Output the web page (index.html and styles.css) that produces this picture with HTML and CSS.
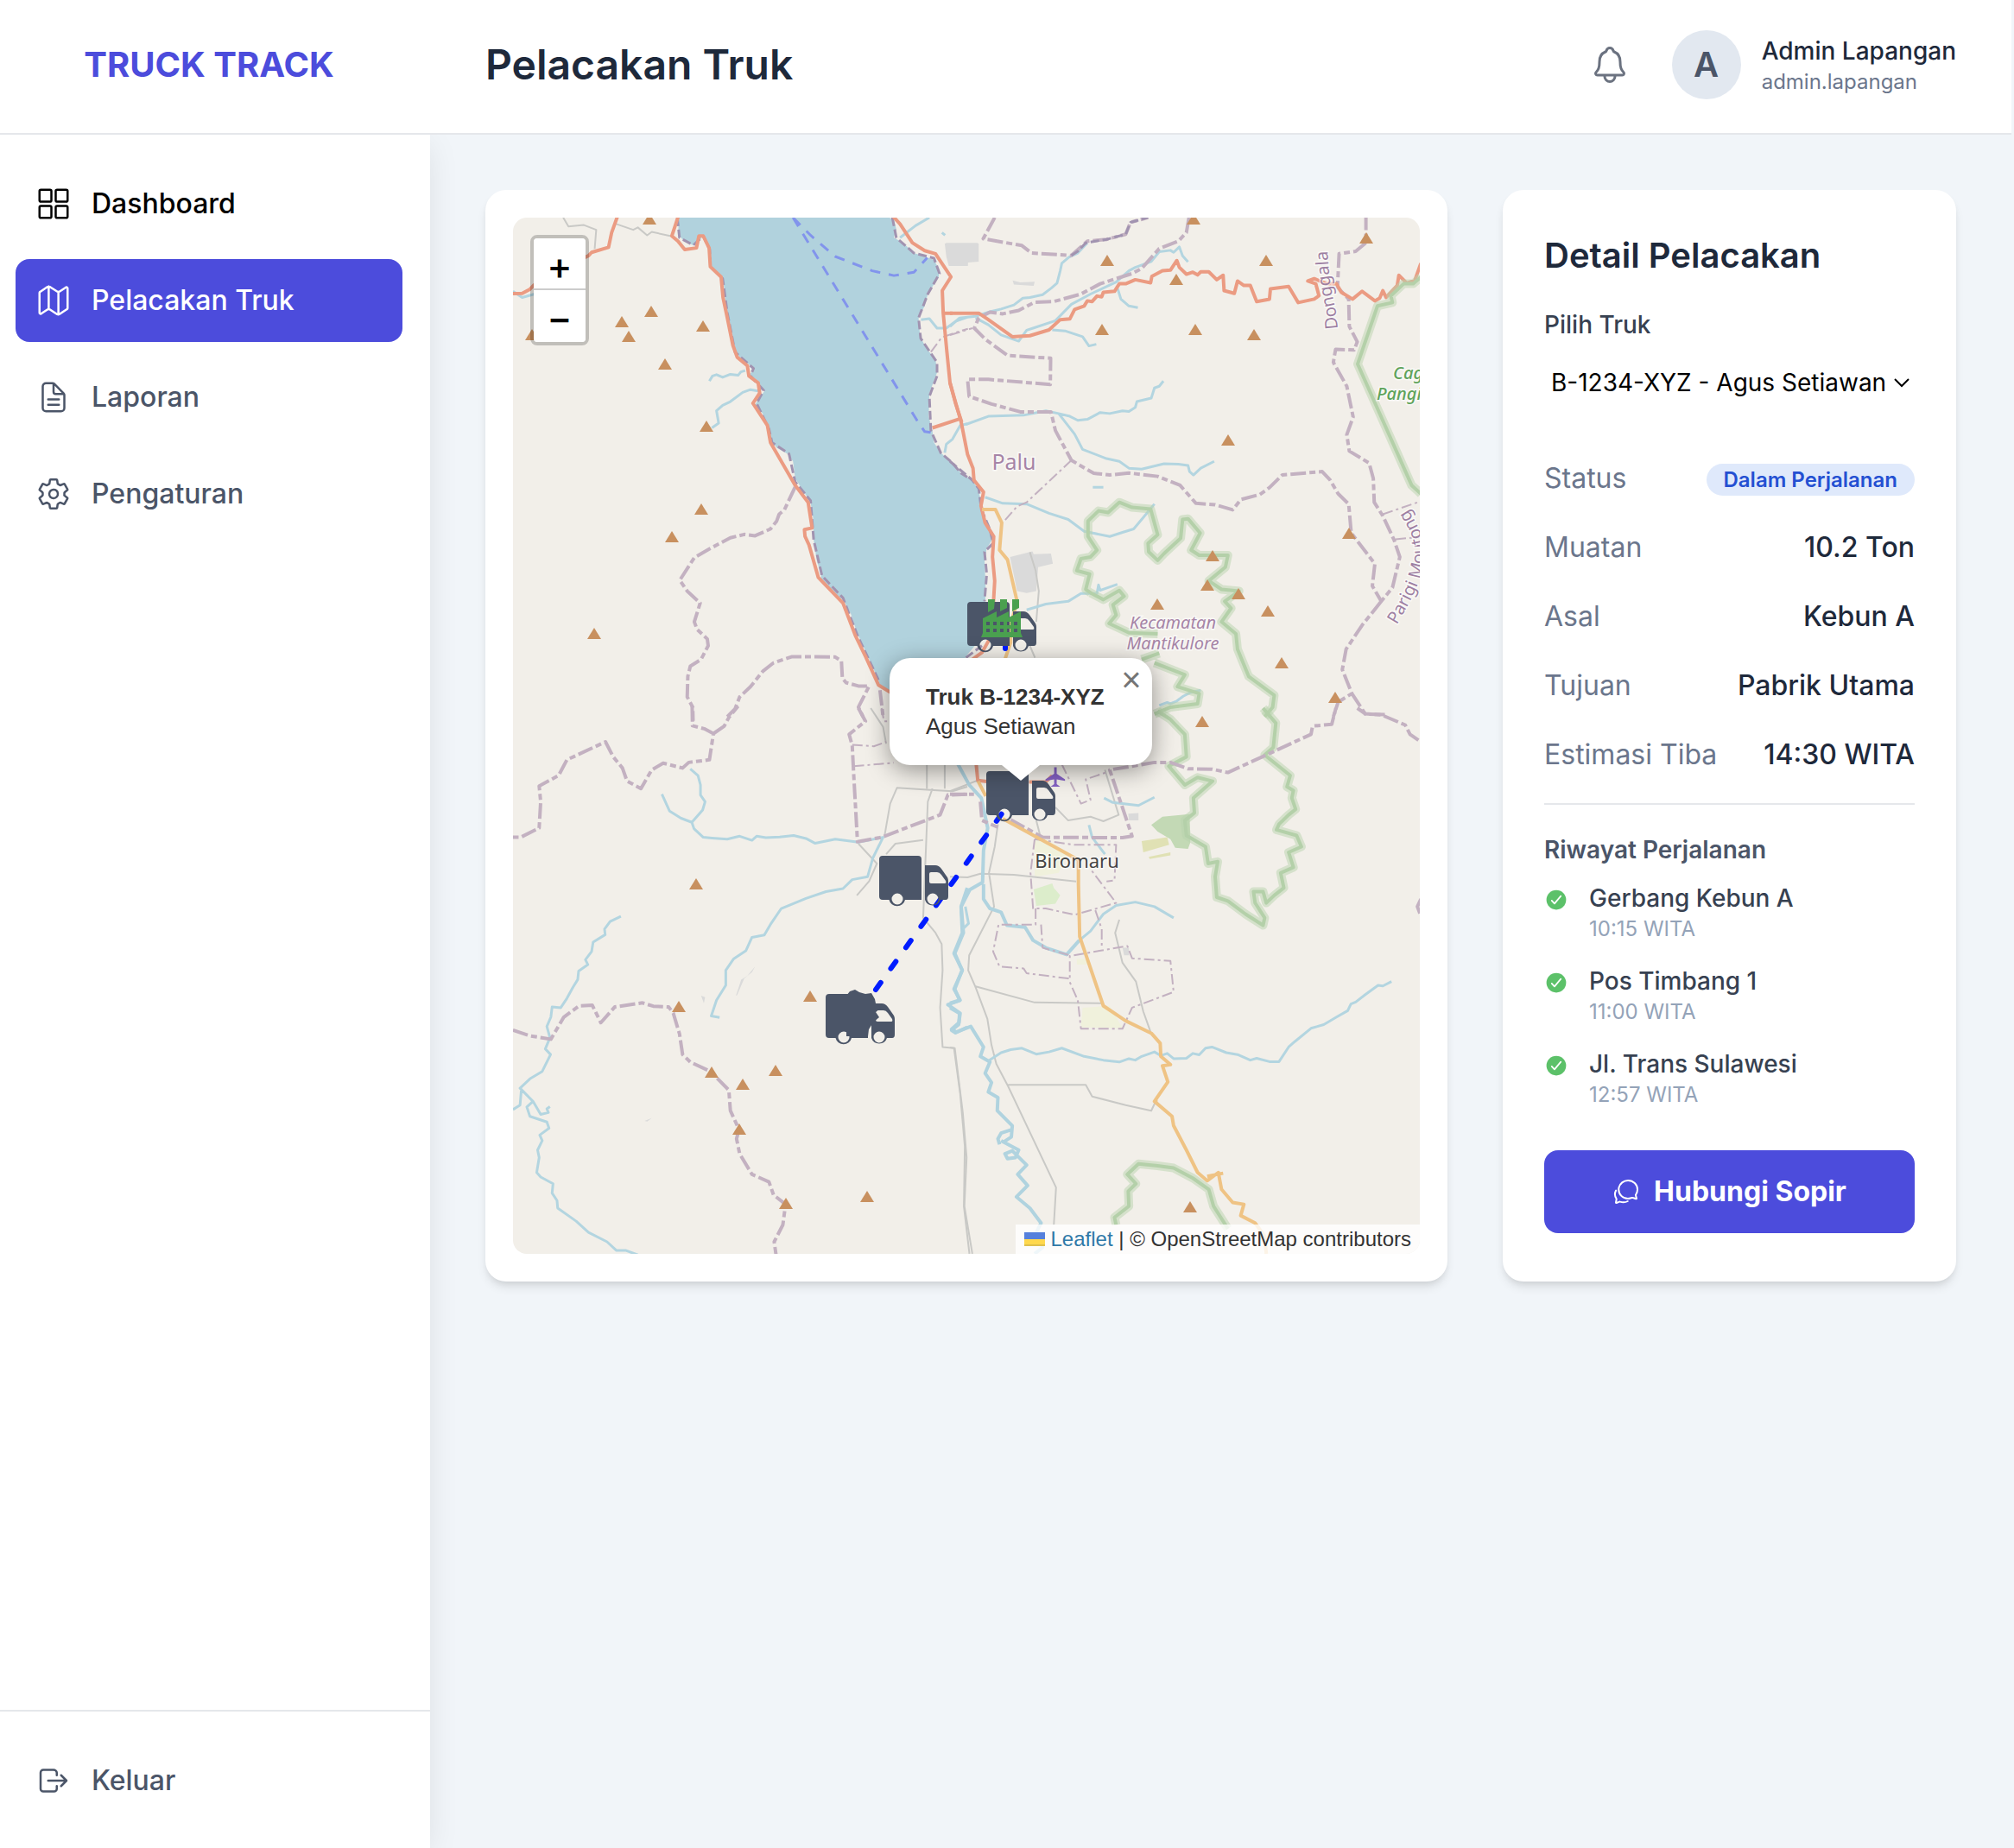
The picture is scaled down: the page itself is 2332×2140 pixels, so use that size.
FILE: index.html
```html
<!DOCTYPE html>
<html lang="id">
<head>
<meta charset="utf-8">
<meta name="viewport" content="width=device-width, initial-scale=1">
<title>Pelacakan Truk</title>
<link rel="stylesheet" href="styles.css">
</head>
<body>
<div class="app">
  <header class="topbar">
    <div class="brand">TRUCK TRACK</div>
    <div class="topbar-main">
      <h1 class="page-title">Pelacakan Truk</h1>
      <div class="account">
        <button class="bell" type="button" aria-label="Notifikasi">
          <svg class="icon icon-lg" viewBox="0 0 512 512"><path d="M427.68 351.43C402 320 383.87 304 383.87 217.35 383.87 138 343.35 109.73 310 96c-4.43-1.82-8.6-6-9.95-10.55C294.2 65.54 277.8 48 256 48s-38.21 17.55-44 37.47c-1.35 4.6-5.52 8.71-9.95 10.53-33.39 13.75-73.87 41.92-73.87 121.35C128.13 304 110 320 84.32 351.43 73.68 364.45 83 384 101.61 384h308.88c18.51 0 27.77-19.61 17.19-32.57zM320 384v16a64 64 0 01-128 0v-16"/></svg>
        </button>
        <div class="avatar">A</div>
        <div class="account-text">
          <div class="account-name">Admin Lapangan</div>
          <div class="account-user">admin.lapangan</div>
        </div>
      </div>
    </div>
  </header>

  <aside class="sidebar">
    <nav class="nav">
      <a class="nav-item nav-dark" href="#dashboard">
        <svg class="icon" viewBox="0 0 512 512"><rect x="48" y="48" width="176" height="176" rx="20"/><rect x="288" y="48" width="176" height="176" rx="20"/><rect x="48" y="288" width="176" height="176" rx="20"/><rect x="288" y="288" width="176" height="176" rx="20"/></svg>
        Dashboard
      </a>
      <a class="nav-item nav-active" href="#pelacakan" aria-current="page">
        <svg class="icon" viewBox="0 0 512 512"><path d="M313.27 124.64L198.73 51.36a32 32 0 00-29.28.35L56.51 127.49A16 16 0 0048 141.63v295.8a16 16 0 0023.49 14.14l97.82-63.79a32 32 0 0129.5-.24l111.86 73a32 32 0 0029.27-.11l115.43-75.94a16 16 0 008.63-14.2V74.57a16 16 0 00-23.49-14.14l-98 63.86a32 32 0 01-29.24.35zM328 128v336M184 384V48"/></svg>
        Pelacakan Truk
      </a>
      <a class="nav-item" href="#laporan">
        <svg class="icon" viewBox="0 0 512 512"><path d="M416 221.25V416a48 48 0 01-48 48H144a48 48 0 01-48-48V96a48 48 0 0148-48h98.75a32 32 0 0122.62 9.37l141.26 141.26a32 32 0 019.37 22.62zM256 56v120a32 32 0 0032 32h120M176 288h160M176 368h160"/></svg>
        Laporan
      </a>
      <a class="nav-item" href="#pengaturan">
        <svg class="icon" viewBox="0 0 512 512"><path d="M262.29 192.31a64 64 0 1057.4 57.4 64.13 64.13 0 00-57.4-57.4zM416.39 256a154.34 154.34 0 01-1.53 20.79l45.21 35.46a10.81 10.81 0 012.45 13.75l-42.77 74a10.81 10.81 0 01-13.14 4.59l-44.9-18.08a16.11 16.11 0 00-15.17 1.75A164.48 164.48 0 01325 400.8a15.94 15.94 0 00-8.82 12.14l-6.73 47.89a11.08 11.08 0 01-10.68 9.17h-85.54a11.11 11.11 0 01-10.69-8.87l-6.72-47.82a16.07 16.07 0 00-9-12.22 155.3 155.3 0 01-21.46-12.57 16 16 0 00-15.11-1.71l-44.89 18.07a10.81 10.81 0 01-13.14-4.58l-42.77-74a10.8 10.8 0 012.45-13.75l38.21-30a16.05 16.05 0 006-14.08c-.36-4.17-.58-8.33-.58-12.5s.21-8.27.58-12.35a16 16 0 00-6.07-13.94l-38.19-30A10.81 10.81 0 0149.48 186l42.77-74a10.81 10.81 0 0113.14-4.59l44.9 18.08a16.11 16.11 0 0015.17-1.75A164.48 164.48 0 01187 111.2a15.94 15.94 0 008.82-12.14l6.73-47.89A11.08 11.08 0 01213.23 42h85.54a11.11 11.11 0 0110.69 8.87l6.72 47.82a16.07 16.07 0 009 12.22 155.3 155.3 0 0121.46 12.57 16 16 0 0015.11 1.71l44.89-18.07a10.81 10.81 0 0113.14 4.58l42.77 74a10.8 10.8 0 01-2.45 13.75l-38.21 30a16.05 16.05 0 00-6.05 14.08c.33 4.14.55 8.3.55 12.47z"/></svg>
        Pengaturan
      </a>
    </nav>
    <div class="sidebar-foot">
      <a class="nav-item" href="#keluar">
        <svg class="icon" viewBox="0 0 512 512"><path d="M304 336v40a40 40 0 01-40 40H104a40 40 0 01-40-40V136a40 40 0 0140-40h152c22.09 0 48 17.91 48 40v40M368 336l80-80-80-80M176 256h256"/></svg>
        Keluar
      </a>
    </div>
  </aside>

  <main class="content">
    <section class="card map-card" aria-label="Peta">
      <div class="map">
        <svg class="map-canvas" viewBox="594 252 1050 1200" preserveAspectRatio="xMidYMid slice">
          <defs>
            <path id="peak" d="M-8 6L0 -7L8 6Z"/>
            <path id="truck" fill-rule="evenodd" d="M4 0H45Q49 0 49 4V51H30A9.500 9.500 0 0 1 11.500 51H4Q0 51 0 47V4Q0 0 4 0ZM14.500 50A6.500 6.500 0 1 0 27.500 50A6.500 6.500 0 1 0 14.500 50ZM53 11H65Q69 11 72 15L79 25Q80 27 80 29V47Q80 51 77 51H71A9.500 9.500 0 0 1 53 51ZM60 19Q58 19 58 21V30Q58 32 60 32H76Q78 32 77 29L72 22Q70 19 67 19ZM55.500 50A6.500 6.500 0 1 0 68.500 50A6.500 6.500 0 1 0 55.500 50Z"/>
            <path id="label-donggala" d="M1549 381C1547 345 1537 340 1537 270"/>
            <path id="label-parigi" d="M1617 724C1636 692 1649 668 1649 640C1649 612 1632 596 1614 562"/>
          </defs>
          <rect class="land" x="594" y="252" width="1050" height="1200"/>

          <!-- north-west sheet -->
          <g transform="translate(560 210) scale(.357143 .395408)">
            <path class="water" d="M630 90L632 130 630 155 650 175 680 187 700 175 712 157 722 180 731 200 733 245 745 262 770 275 780 310 785 370 800 430 810 490 830 515 858 535 877 550 862 565 890 585 910 615 890 640 880 655 905 680 922 715 930 755 950 780 985 798 1003 820 1010 870 1035 905 1060 940 1068 985 1070 1050 1080 1110 1095 1155 1090 1170 1130 1205 1165 1225 1190 1265 1210 1320 1240 1380 1270 1440 1285 1475 1316 1500 1500 1480 1569 1385 1620 1330 1628 1200 1624 1110 1631 1075 1652 1045 1621 990 1613 940 1603 900 1584 875 1548 855 1512 820 1482 795 1460 765 1455 730 1443 690 1445 620 1470 560 1465 520 1440 495 1415 455 1410 400 1430 365 1440 330 1475 280 1478 260 1460 230 1430 220 1395 210 1360 180 1330 165 1338 140 1330 115 1290 90Z"/>
            <path class="urban" d="M1495 182H1605V235L1570 238V248H1508L1500 220Z"/>
            <path class="track" d="M258 106L275 132 325 128 365 142 360 198M430 125L485 142 500 135 530 158 545 148 605 160"/>
            <path class="river" d="M95 322L125 340 165 330M732 585L742 570 755 566 775 574 800 565 825 568 834 558 848 554M740 722L762 708 755 672 775 656 800 645 840 618 865 610 890 614M1350 165L1400 130 1445 106M1486 150L1496 158M1418 405L1445 402 1470 430 1500 430 1530 410 1568 398M1568 710L1545 715 1520 755 1500 770 1495 795"/>
            <path class="boundary" d="M1010 895L975 962 958 975 950 995 930 1018 880 1038 845 1034 800 1044 735 1075 683 1102 636 1168 660 1200 702 1235 683 1290 692 1312 725 1340 728 1360 705 1400 670 1420 662 1450 660 1510 678 1540 679 1580M790 1568L815 1545 830 1510 865 1480 905 1435 940 1410 1000 1392 1140 1393 1160 1405 1163 1455 1175 1468 1215 1478 1250 1478 1215 1540 1230 1568M1285 1490L1295 1568"/>
            <path class="coast" d="M628 106L635 165 680 187 712 160 733 200 735 250 775 285 790 385 815 500 875 548 865 570 908 612 885 650 925 725 935 765 990 798 1010 880 1060 935 1070 1050 1097 1155 1165 1220 1212 1330 1280 1460M1325 106L1338 165 1395 210 1460 225 1478 270 1440 330 1410 400 1417 460 1470 530 1470 570 1445 630 1450 730 1482 795 1520 825 1548 855 1568 866"/>
            <path class="boundary thin" d="M1450 500L1485 457 1540 440 1570 432"/>
            <path class="trunk" d="M95 329L125 328 150 316 165 302M325 224L340 218 350 208 405 193 415 150 435 100M632 100L610 160 630 175 652 200 690 195 698 160 712 160 731 195 735 250 770 280 776 340 790 400 808 480 822 515 855 540 860 570 890 590 895 620 873 650 920 715 930 765 1010 890 1052 940 1065 1015 1040 1020 1042 1040 1055 1065 1085 1160 1165 1235 1205 1330 1240 1395 1280 1475 1325 1500M1325 100L1350 125 1390 180 1430 203 1465 212 1515 280 1487 320 1490 386 1502 500 1512 590 1530 650 1550 705M1490 386H1520M1455 722L1545 695"/>
            <path class="ferry" d="M1003 106L1405 700 1430 733 1455 736M1003 106L1060 158 1140 220 1260 262 1330 276 1395 266 1438 224"/>
          </g>

          <!-- north-east sheet -->
          <g transform="translate(1100 210) scale(.369898 .395408)">
            <path class="urban" d="M188 1100L258 1084 262 1092 316 1090 322 1120 276 1130 270 1200 240 1206 210 1200ZM196 290L220 296 265 294 262 306 200 302ZM-13 180H87V232L55 236V246H0Z"/>
            <path class="track" d="M250 1086L268 1140 278 1200 270 1290M250 1360L266 1395"/>
            <path class="river" d="M0 425L30 400 80 395 125 382 160 374 200 362 228 342 250 340 290 332 318 312 335 298 345 262 350 240 372 222 400 210 430 180M80 400L120 420 160 450 215 468 240 436 260 430 330 408 380 360 440 330 520 295 560 262 580 252 630 235 655 206 690 202 700 208 718 192 728 218 745 236M525 315L535 345 560 365 588 370M320 435L360 438 415 455 435 482 458 477M50 712L120 688 230 685 300 672 340 680 375 688 400 700 430 697 470 677 500 680 540 672 560 674 580 662 585 645 630 635 640 605 655 600 668 585M340 680L390 740 415 785 490 812 530 820 560 840 600 843 670 827 715 828 745 832 750 850 762 860 785 840 827 820M110 925L165 943 240 945 310 972 370 990 420 1025 500 1040 540 1028 575 1018 600 990 640 945M447 896H480M240 1255L300 1238 370 1230 410 1207 460 1207 465 1182 470 1198 524 1180M655 1535L680 1526 690 1530 710 1522 730 1508 750 1498 785 1490"/>
            <path class="boundary" d="M140 106L104 168 225 188 255 210 380 217 430 175 490 170 550 155 565 120 620 106M748 106L740 150 715 175 655 197 600 255 570 270 470 300 410 330 325 352 265 354 215 378 165 388 125 383 90 400 76 430 110 462 180 510 315 518 314 595 120 580 55 580 60 630 130 652 220 675 316 675 330 730 380 817 450 855 500 860 560 854 650 864 720 890 770 943 830 947 885 962 910 932 970 917 1000 897 1040 860 1165 850 1190 875 1215 915 1248 945 1256 1030 1330 1120 1322 1185 1350 1230 1385 1190 1408 1100 1390 1050 1355 980 1328 940 1325 870 1312 825 1250 790 1242 742 1262 690 1242 600 1200 530 1207 492 1265 494 1275 470 1250 425 1248 345 1213 310 1218 212 1270 205 1302 180V106M1350 1230L1290 1300 1240 1370 1228 1430 1258 1500 1215 1525 1200 1568M1258 1500L1300 1560 1370 1562"/>
            <path class="boundary thin" d="M0 450L70 430M380 817L240 940 210 952 165 1000M1355 975L1470 938M1395 1048L1470 1042"/>
            <path class="coast" d="M0 820L70 875 90 900 98 960 125 1020 135 1060 108 1085 115 1150 108 1230M50 1395L100 1360M380 217L400 205 425 180 490 170 550 155 565 120 620 106"/>
            <path class="trunk" d="M0 590L15 640 35 705 55 800 72 840 75 875 105 910 97 950 110 1000 137 1040 133 1100 140 1170 130 1330 100 1380 70 1400M0 386H90L120 405 195 455 250 452 310 435 345 405 375 403 390 375 420 365 430 350 445 352 460 336 475 338 480 325 515 322 530 300 550 300 580 288 628 297 632 278 665 262 690 260 710 232 718 252 740 272 760 266 775 274 785 265 810 265 835 288 855 275 858 320 890 328 900 292 920 305 940 305 960 352 1000 345 1003 315 1060 308 1090 355 1140 345 1155 335 1145 300 1120 292 1140 285 1180 300 1210 300 1225 325 1260 345 1290 322 1330 350 1345 342 1355 320 1365 340 1400 305 1405 275 1430 298 1455 290 1474 240"/>
            <path class="primary" d="M100 961H142L162 1000 155 1080 180 1108 210 1230 190 1300V1350L172 1400"/>
            <path class="reserve-halo" d="M1474 280L1450 300 1420 300 1380 335 1385 355 1338 365 1276 535 1445 890 1474 915M440 1205L425 1195 437 1150 397 1140 410 1105 440 1100 460 1080 432 1040V995L465 965 495 970 530 940 570 955 628 960 650 1035 620 1060 622 1085 650 1110 670 1090 722 1045 728 990 745 988 783 1030 755 1080 780 1095 870 1095 862 1130 810 1170 850 1195 905 1200 860 1230 880 1250 850 1290 895 1325 900 1370 935 1450 1015 1505 1010 1540 985 1568M440 1205L480 1225 530 1198 545 1215 510 1240 520 1270 498 1295 560 1322 650 1325M600 1400L655 1382M640 1410L735 1445 712 1480 780 1500 775 1530 690 1540 640 1560"/>
            <path class="reserve" d="M1474 280L1450 300 1420 300 1380 335 1385 355 1338 365 1276 535 1445 890 1474 915M440 1205L425 1195 437 1150 397 1140 410 1105 440 1100 460 1080 432 1040V995L465 965 495 970 530 940 570 955 628 960 650 1035 620 1060 622 1085 650 1110 670 1090 722 1045 728 990 745 988 783 1030 755 1080 780 1095 870 1095 862 1130 810 1170 850 1195 905 1200 860 1230 880 1250 850 1290 895 1325 900 1370 935 1450 1015 1505 1010 1540 985 1568M440 1205L480 1225 530 1198 545 1215 510 1240 520 1270 498 1295 560 1322 650 1325M600 1400L655 1382M640 1410L735 1445 712 1480 780 1500 775 1530 690 1540 640 1560"/>
          </g>

          <!-- south-west sheet -->
          <g transform="translate(560 820) scale(.357143 .433673)">
            <path class="urban" d="M818 768L835 725 855 715 880 690 870 705 845 722 822 766ZM522 1102L545 1095 530 1104ZM705 768L718 772 714 788Z"/>
            <path class="track" d="M1255 0L1295 50 1305 95M1437 150V215M1495 150V215M1437 218L1340 213 1318 255 1300 340M1455 215L1440 250 1425 560 1465 600 1485 630 1488 700 1480 800 1488 905 1525 908 1545 1030 1560 1170 1557 1330 1575 1457M1340 213L1437 218 1520 222 1568 210M1215 362L1275 415 1250 462 1210 500M1305 390L1335 362 1425 352"/>
            <path class="river" d="M670 162L695 180 703 205 703 232 718 250 710 272 675 305 640 294 603 275 578 230M675 305L682 322 712 345 740 347 790 350 830 342 870 353 885 342 915 346 960 344 1005 340 1045 348 1075 361 1140 350 1215 358 1295 345 1262 400 1245 450 1195 458 1165 482 1110 490 1045 508 965 535 932 575 910 606 870 612 850 648 810 670 785 700V740L755 780 738 822 765 826M445 556L410 570 392 590 394 605 355 625 350 650 330 672 338 685 308 702 305 725 290 745 270 775 250 800 222 798 218 825 205 850 215 880 200 910 217 925 190 970 150 990 118 1015 160 1050 185 1085 210 1080 205 1070 215 1064M95 1072L118 1060 122 1022M160 1050L140 1065 150 1090 205 1105 212 1122 182 1140 190 1155 175 1180 180 1200 172 1240 185 1252 225 1270 222 1295 238 1315 240 1335 300 1370 340 1400 400 1425 430 1448 460 1448 500 1460"/>
            <path class="river-wide" d="M1568 480L1548 530 1552 600 1525 655 1552 700 1525 750 1545 780 1505 792 1545 815 1540 845 1517 860 1530 867 1568 852"/>
            <path class="boundary" d="M676 -5L677 47 715 55 745 68 732 138 665 145 645 160 582 147 545 165 510 215 465 195 450 160 420 130 395 90 270 138 243 180 180 208 185 250 180 320 120 345H95M745 68L780 48 795 25 825 -5M1215 0L1238 35 1185 70 1195 100 1200 180 1212 357 1290 345 1480 285 1505 232 1568 230M95 860L150 875 218 884 260 825 310 795 352 793 380 840 425 798 515 787 550 796 600 798 615 815 635 870 645 925 670 945 735 970 795 1020 800 1075 828 1125 820 1150 830 1190 870 1245 925 1265 940 1300 979 1325 970 1380 942 1425 948 1460"/>
            <path class="boundary thin" d="M1195 98L1265 102 1305 90M1200 155L1330 146M1290 0L1298 35H1320"/>
          </g>

          <!-- south-east sheet -->
          <g transform="translate(1100 820) scale(.369898 .433673)">
            <path class="field" d="M600 355L680 345 686 365 605 385ZM622 397L690 385V393L625 403Z"/>
            <path class="field pale" d="M415 800L500 795 540 855 410 852ZM397 670H430V685H397ZM265 352L300 350 370 385 340 440 265 450Z"/>
            <path class="wood" d="M630 312L665 290 750 283 752 360 745 376 705 373 690 350 650 330Z"/>
            <path class="orchard" d="M262 484L320 468 325 480 345 500 330 522 270 528Z"/>
            <path class="urban" d="M558 282L590 280V300H560ZM540 640H560V660H545Z"/>
            <path class="reserve-halo" d="M980 0L1020 40 1012 105 985 125 1065 180 1055 210 1075 220 1070 240 1082 270 1060 285 1030 310 1022 325 1085 340 1100 370 1060 385 1075 425 1035 440 1045 480 1015 500 990 520 980 490 950 490 955 520 985 560 980 580 925 550 870 515 835 505 830 450 838 410 808 415 800 370 740 340 735 300 765 280 762 240 822 195 775 185 735 205 685 155 740 130 735 70 690 30 650 8M520 1380L515 1360 560 1330 558 1290 582 1270 555 1245 590 1217 650 1222 700 1228 760 1255 810 1285 825 1330 870 1390"/>
            <path class="reserve" d="M980 0L1020 40 1012 105 985 125 1065 180 1055 210 1075 220 1070 240 1082 270 1060 285 1030 310 1022 325 1085 340 1100 370 1060 385 1075 425 1035 440 1045 480 1015 500 990 520 980 490 950 490 955 520 985 560 980 580 925 550 870 515 835 505 830 450 838 410 808 415 800 370 740 340 735 300 765 280 762 240 822 195 775 185 735 205 685 155 740 130 735 70 690 30 650 8M520 1380L515 1360 560 1330 558 1290 582 1270 555 1245 590 1217 650 1222 700 1228 760 1255 810 1285 825 1330 870 1390"/>
            <path class="track" d="M0 450L55 452 95 442 200 445 395 463M0 222L80 195 250 198M270 300L285 350M330 265L370 300 440 290 480 302 528 285 485 165M150 310L140 370 122 440 138 530 60 660 57 700 80 745 117 830 130 900 145 950 182 1010 332 1280 325 1380M80 743L265 786 480 788M530 565L517 600 540 680 582 730 605 810 628 865M182 1006H425L445 1037 550 1060 630 1075 645 1048M0 906L15 908 40 1080 52 1200 45 1330 70 1457"/>
            <path class="river-wide" d="M25 150L60 205 98 240 118 320 105 380 102 465 62 485 35 530 42 600 15 655 38 700 15 750 30 780 0 788M0 800L30 815 28 840 5 857 20 865 65 850 105 905 95 930 125 945 110 975 130 1000 120 1025 150 1040 148 1075 195 1115 192 1145 165 1160M195 1125L160 1135 150 1150 155 1165M160 1155L215 1180 205 1200 180 1203 172 1190 195 1182 240 1220 212 1245 243 1275 208 1305 250 1335 285 1375 270 1400 290 1440 265 1457M105 470V510L125 535 160 545 178 580 235 585 260 620 300 640 365 658 405 620"/>
            <path class="river" d="M405 620L440 595 480 550 520 527 580 518 640 530 700 560M48 530L58 575 40 590M482 240L510 252 590 260 640 238M435 312L445 345 485 390M120 942L160 920 190 912 225 908 270 924 310 918 350 908 420 930 480 940 530 945 560 936 580 940 600 930 640 918 660 928 680 922 700 936 740 935 760 922 780 926 800 908 820 905 865 920 900 925 940 940 960 935 1000 944 1030 944 1060 905 1080 890 1130 855 1170 845 1210 825 1245 808 1255 790 1270 785 1300 765 1340 740 1355 742 1382 730"/>
            <path class="boundary" d="M0 230H75M95 250L100 300 150 318M190 298L290 345 540 346 570 342 500 165 640 145 690 145 745 162 820 163 870 172 985 127 1130 70 1135 48 1195 43 1208 0M1275 0L1300 15 1350 18 1425 45 1440 70 1474 90M1474 510L1463 530 1474 555"/>
            <path class="boundary thin" d="M350 150L410 255 440 245 425 190 495 170M265 350L390 365 520 365 515 460 490 463M265 350L252 440 260 535 300 535 390 552 520 520 440 430M268 535V578H152L135 650 155 690 230 695 240 708 370 722 400 780 410 856H540L570 800 700 758 690 675 570 668 555 635 375 662V722M285 578L290 640 375 660M455 540L475 590V640"/>
            <path class="trunk" d="M82 150L87 193 115 196M248 197H300L320 180"/>
            <path class="primary" d="M88 195L112 235M165 295L402 405V470L406 610 480 795 550 835 630 868 658 895 660 930 690 952 665 955 682 998 640 1050 695 1090 700 1115 740 1180 775 1240 805 1262 840 1240 850 1285 885 1320 920 1325 910 1355 955 1375 985 1410 990 1457M805 1250L855 1242M640 1050H650"/>
            <path class="airport" d="M326 158H334V175L360 190V194L334 190V203L345 210H315L326 203V190L299 194V190L326 175Z"/>
          </g>

          <g class="peaks">
            <use href="#peak" x="752" y="254"/><use href="#peak" x="720" y="373"/><use href="#peak" x="728" y="390"/><use href="#peak" x="754" y="361"/><use href="#peak" x="814" y="378"/><use href="#peak" x="770" y="422"/><use href="#peak" x="818" y="494"/><use href="#peak" x="812" y="590"/><use href="#peak" x="778" y="622"/><use href="#peak" x="688" y="734"/><use href="#peak" x="616" y="388"/>
            <use href="#peak" x="1382" y="254"/><use href="#peak" x="1582" y="276"/><use href="#peak" x="1282" y="302"/><use href="#peak" x="1466" y="302"/><use href="#peak" x="1362" y="324"/><use href="#peak" x="1276" y="382"/><use href="#peak" x="1384" y="382"/><use href="#peak" x="1452" y="388"/><use href="#peak" x="1422" y="510"/><use href="#peak" x="1562" y="618"/><use href="#peak" x="1404" y="644"/><use href="#peak" x="1398" y="678"/><use href="#peak" x="1434" y="688"/><use href="#peak" x="1340" y="700"/><use href="#peak" x="1468" y="708"/><use href="#peak" x="1484" y="768"/><use href="#peak" x="1546" y="808"/>
            <use href="#peak" x="806" y="1024"/><use href="#peak" x="938" y="1154"/><use href="#peak" x="786" y="1166"/><use href="#peak" x="824" y="1242"/><use href="#peak" x="860" y="1256"/><use href="#peak" x="898" y="1240"/><use href="#peak" x="856" y="1308"/><use href="#peak" x="910" y="1394"/><use href="#peak" x="1004" y="1386"/><use href="#peak" x="1392" y="836"/><use href="#peak" x="1378" y="1398"/>
          </g>

          <g class="place">
            <text class="place-city" x="1174" y="544">Palu</text>
            <text class="place-district" x="1358" y="728">Kecamatan</text>
            <text class="place-district" x="1358" y="752">Mantikulore</text>
            <text class="place-town" x="1247" y="1005">Biromaru</text>
            <text class="place-park" x="1613" y="439">Cag</text>
            <text class="place-park" x="1594" y="463">Pangi</text>
            <text class="place-region"><textPath href="#label-donggala">Donggala</textPath></text>
            <text class="place-region"><textPath href="#label-parigi">Parigi Moutong</textPath></text>
          </g>

          <path class="route" d="M1014 1146L1163 938M1164 748V751"/>
          <g class="trucks">
            <use href="#truck" x="1120" y="697"/>
            <use href="#truck" x="1142" y="893"/>
            <use href="#truck" x="1018" y="991"/>
            <use href="#truck" x="956" y="1151"/>
            <path d="M980 1153L984 1148 990 1146 995 1149 1002 1151 1009 1150 1013 1157 1014 1162 1020 1167 1014 1172 1018 1178 1011 1184 1006 1192 1005 1200H980Z"/>
          </g>
          <path class="factory" fill-rule="evenodd" d="M1144 694H1152L1151 705 1144 709ZM1158 694H1166V704L1158 708ZM1172 694H1180V704L1172 708ZM1138 716L1154 708V715L1168 708V715L1182 708V733L1184 738H1136L1138 733ZM1142 720V724H1146V720ZM1150 720V724H1154V720ZM1158 720V724H1162V720ZM1166 720V724H1170V720ZM1174 720V724H1178V720ZM1142 728V732H1146V728ZM1150 728V732H1154V728ZM1158 728V732H1162V728ZM1166 728V732H1170V728ZM1174 728V732H1178V728Z"/>
        </svg>

        <div class="zoom">
          <button type="button" aria-label="Perbesar">+</button>
          <button type="button" aria-label="Perkecil">−</button>
        </div>

        <div class="popup">
          <strong>Truk B-1234-XYZ</strong>
          <span>Agus Setiawan</span>
          <button class="popup-close" type="button" aria-label="Tutup">×</button>
        </div>

        <div class="attribution">
          <svg class="flag" viewBox="0 0 24 16"><path fill="#5580dc" d="M0 0h24v8H0z"/><path fill="#ffd84d" d="M0 8h24v6H0z"/><path fill="#dfc04d" d="M0 14h24v2H0z"/></svg>
          <a href="#leaflet">Leaflet</a> | © OpenStreetMap contributors
        </div>
      </div>
    </section>

    <section class="card detail">
      <h2 class="detail-title">Detail Pelacakan</h2>
      <label class="field-label" for="truck-select">Pilih Truk</label>
      <div class="select-wrap">
        <select id="truck-select"><option>B-1234-XYZ - Agus Setiawan</option></select>
        <svg class="chevron" viewBox="0 0 18 12"><path d="M1 1l8 8 8-8"/></svg>
      </div>
      <dl class="facts">
        <div><dt>Status</dt><dd><span class="badge">Dalam Perjalanan</span></dd></div>
        <div><dt>Muatan</dt><dd>10.2 Ton</dd></div>
        <div><dt>Asal</dt><dd>Kebun A</dd></div>
        <div><dt>Tujuan</dt><dd>Pabrik Utama</dd></div>
        <div><dt>Estimasi Tiba</dt><dd>14:30 WITA</dd></div>
      </dl>
      <div class="history">
        <h3 class="history-title">Riwayat Perjalanan</h3>
        <ul class="history-list">
          <li>
            <svg class="check" viewBox="0 0 512 512"><circle cx="256" cy="256" r="208"/><path d="M352 176L218 336l-58-64"/></svg>
            <div><div class="stop">Gerbang Kebun A</div><div class="time">10:15 WITA</div></div>
          </li>
          <li>
            <svg class="check" viewBox="0 0 512 512"><circle cx="256" cy="256" r="208"/><path d="M352 176L218 336l-58-64"/></svg>
            <div><div class="stop">Pos Timbang 1</div><div class="time">11:00 WITA</div></div>
          </li>
          <li>
            <svg class="check" viewBox="0 0 512 512"><circle cx="256" cy="256" r="208"/><path d="M352 176L218 336l-58-64"/></svg>
            <div><div class="stop">Jl. Trans Sulawesi</div><div class="time">12:57 WITA</div></div>
          </li>
        </ul>
      </div>
      <button class="contact" type="button">
        <svg class="icon icon-sm" viewBox="0 0 512 512"><path d="M431 320.6c-1-3.600 1.200-8.600 3.300-12.200a33.680 33.680 0 012.100-3.100A162 162 0 00464 215c.3-92.200-77.500-167-173.700-167-83.900 0-153.900 57.100-170.300 132.900a160.700 160.700 0 00-3.700 34.200c0 92.300 74.800 169.100 171 169.100 15.300 0 35.900-4.600 47.200-7.700s22.500-7.200 25.400-8.300a26.440 26.440 0 019.300-1.700 26 26 0 0110.100 2l56.700 20.100a13.520 13.520 0 003.900 1 8 8 0 008-8 12.850 12.850 0 00-.5-2.700z"/><path d="M66.460 232a146.230 146.230 0 006.390 152.670c2.310 3.490 3.610 6.190 3.210 8s-11.930 61.870-11.930 61.870a8 8 0 002.710 7.680A8.170 8.170 0 0072 464a7.260 7.260 0 002.910-.6l56.210-22a15.700 15.700 0 0112 .2c18.940 7.380 39.880 12 60.830 12A159.210 159.210 0 00284 432.110"/></svg>
        Hubungi Sopir
      </button>
    </section>
  </main>
</div>
</body>
</html>
```
FILE: styles.css
```css
*, *::before, *::after { box-sizing: border-box; }

:root {
  --accent: #4c4cdc;
  --line: #e5e7eb;
  --ink: #1e293b;
  --slate-700: #374151;
  --slate-600: #4b5568;
  --slate-500: #6b768c;
  --slate-400: #94a3b8;
}

body {
  margin: 0;
  background: #f1f5f9;
  color: var(--ink);
  font-family: Inter, "Liberation Sans", sans-serif;
  font-size: 32px;
  line-height: 48px;
}

h1, h2, h3, dl, dd, ul { margin: 0; padding: 0; }
button, select { font: inherit; }

.app {
  display: grid;
  grid-template-columns: 498px 1fr;
  grid-template-rows: auto 1fr;
  min-height: 100vh;
  padding-right: 3px;
}

/* top bar */
.topbar {
  grid-column: 1 / -1;
  z-index: 2;
  display: grid;
  grid-template-columns: subgrid;
  align-items: center;
  padding: 35px 0 39px;
  background: #fff;
  border-bottom: 2px solid var(--line);
}
.brand {
  padding: 0 32px 0 18px;
  text-align: center;
  color: var(--accent);
  font-size: 40px;
  font-weight: 700;
}
.topbar-main {
  display: flex;
  align-items: center;
  justify-content: space-between;
  padding: 0 64px;
}
.page-title { font-size: 48px; font-weight: 600; line-height: 64px; }
.account { display: flex; align-items: center; }
.bell {
  display: flex;
  margin-right: 48px;
  padding: 0;
  border: 0;
  background: none;
  color: #6b7280;
}
.avatar {
  display: grid;
  place-items: center;
  width: 80px;
  height: 80px;
  margin-right: 24px;
  border-radius: 50%;
  background: #e2e8f0;
  color: var(--slate-600);
  font-size: 40px;
  font-weight: 600;
}
.account-name { font-size: 28px; font-weight: 500; line-height: 40px; }
.account-user { font-size: 24px; line-height: 32px; color: var(--slate-500); }

/* icons */
.icon {
  width: 40px;
  height: 40px;
  flex: none;
  fill: none;
  stroke: currentColor;
  stroke-width: 32;
  stroke-linecap: round;
  stroke-linejoin: round;
}
.icon-lg { width: 48px; height: 48px; }
.icon-sm { width: 32px; height: 32px; }

/* sidebar */
.sidebar {
  z-index: 1;
  display: flex;
  flex-direction: column;
  justify-content: space-between;
  background: #fff;
  box-shadow: 0 8px 36px -4px rgba(0, 0, 0, .1);
}
.nav {
  display: flex;
  flex-direction: column;
  gap: 16px;
  padding: 32px 32px 32px 18px;
}
.nav-item {
  display: flex;
  align-items: center;
  gap: 24px;
  padding: 24px;
  border-radius: 16px;
  color: var(--slate-600);
  font-weight: 500;
  text-decoration: none;
}
.nav-dark { color: #000; }
.nav-active { background: var(--accent); color: #fff; }
.sidebar-foot {
  padding: 32px 32px 30px 18px;
  border-top: 2px solid var(--line);
}

/* content */
.content {
  display: grid;
  grid-template-columns: repeat(3, 1fr);
  column-gap: 64px;
  align-self: start;
  padding: 64px;
}
.content > * { min-width: 0; }
.card {
  background: #fff;
  border-radius: 24px;
  box-shadow: 0 8px 12px -2px rgba(0, 0, 0, .1), 0 4px 8px -4px rgba(0, 0, 0, .1);
}

/* map */
.map-card { grid-column: span 2; padding: 32px; }
.map {
  position: relative;
  height: 1200px;
  overflow: hidden;
  border-radius: 16px;
  font-family: "Liberation Sans", sans-serif;
  color: #333;
}
.map-canvas { display: block; width: 100%; height: 100%; }
.map-canvas path { stroke-linejoin: round; vector-effect: non-scaling-stroke; }
.land { fill: #f2efe9; }
.water { fill: #b1d2dd; }
.urban { fill: #dadada; }
.field { fill: #e0e1b4; }
.field.pale { fill: #f0f1dc; }
.wood { fill: #c3d9b5; }
.orchard { fill: #cdebb8; opacity: .6; }
.track, .river, .river-wide, .boundary, .coast, .trunk, .ferry, .primary, .reserve, .reserve-halo { fill: none; }
.track { stroke: #c9c9c6; stroke-width: 2px; }
.river { stroke: #b3d5e0; stroke-width: 3px; }
.river-wide { stroke: #b0d3df; stroke-width: 4px; }
.boundary { stroke: #c3b1c1; stroke-width: 4px; stroke-dasharray: 18 4 7 4; }
.boundary.thin { stroke-width: 2px; stroke-dasharray: 12 4 3 4; }
.coast { stroke: #a193b0; stroke-width: 3px; stroke-dasharray: 10 4; }
.trunk { stroke: #eb9b82; stroke-width: 4px; }
.primary { stroke: #efc384; stroke-width: 4px; }
.ferry { stroke: #8294ec; stroke-width: 3px; stroke-dasharray: 12 10; }
.reserve-halo { stroke: #b9d4ae; stroke-width: 10px; opacity: .5; }
.reserve { stroke: #b4d0a9; stroke-width: 4px; }
.airport { fill: #8461c4; }
.peaks { fill: #c8905f; }
.place { font-family: "Noto Sans", sans-serif; }
.place text { paint-order: stroke; stroke: rgba(255, 255, 255, .6); stroke-width: 3px; }
.place-city { font-size: 25px; fill: #a684a6; text-anchor: middle; }
.place-district { font-size: 20px; font-style: italic; fill: #a684a6; text-anchor: middle; }
.place-town { font-size: 22px; fill: #444; text-anchor: middle; }
.place-park { font-size: 20px; font-weight: 500; font-style: italic; fill: #5fa35a; }
.place-region { font-size: 20px; fill: #9d7fa2; }
.route {
  fill: none;
  stroke: #001cff;
  stroke-width: 6px;
  stroke-linecap: round;
  stroke-dasharray: 10 20;
}
.trucks { fill: #4b5568; }
.factory { fill: #4aa04f; }

.zoom {
  position: absolute;
  top: 20px;
  left: 20px;
  border: 4px solid rgba(0, 0, 0, .2);
  border-radius: 8px;
  background-clip: padding-box;
}
.zoom button {
  display: block;
  width: 60px;
  height: 60px;
  padding: 4px 0 0;
  border: 0;
  background: #fff;
  color: #000;
  font-family: Inter, sans-serif;
  font-size: 44px;
  font-weight: 500;
  line-height: 56px;
}
.zoom button:first-child { border-bottom: 2px solid #ccc; border-radius: 4px 4px 0 0; }
.zoom button:last-child { border-radius: 0 0 4px 4px; }

.popup {
  position: absolute;
  top: 510px;
  left: 436px;
  display: flex;
  flex-direction: column;
  width: 304px;
  padding: 28px 42px;
  border-radius: 24px;
  background: #fff;
  box-shadow: 0 6px 28px rgba(0, 0, 0, .4);
  font-size: 26px;
  line-height: 34px;
  white-space: nowrap;
}
.popup::after {
  content: "";
  position: absolute;
  top: 100%;
  left: 130px;
  width: 44px;
  height: 18px;
  background: #fff;
  clip-path: polygon(0 0, 100% 0, 50% 100%);
}
.popup-close {
  position: absolute;
  top: 0;
  right: 0;
  width: 48px;
  height: 48px;
  padding: 0;
  border: 0;
  background: none;
  color: #757575;
  font-size: 40px;
  line-height: 50px;
}

.attribution {
  position: absolute;
  right: 0;
  bottom: 0;
  padding: 0 10px;
  background: rgba(255, 255, 255, .8);
  font-size: 24px;
  line-height: 34px;
  white-space: nowrap;
}
.attribution a { color: #2f79a8; text-decoration: none; }
.flag { width: 24px; height: 16px; }

/* detail card */
.detail { padding: 48px; }
.detail-title { font-size: 40px; font-weight: 600; line-height: 56px; }
.field-label {
  display: block;
  margin: 32px 0 8px;
  color: var(--slate-700);
  font-size: 28px;
  font-weight: 500;
  line-height: 40px;
}
.select-wrap { position: relative; }
.select-wrap select {
  display: block;
  width: 100%;
  height: 78px;
  padding: 0 32px 0 8px;
  border: 0;
  appearance: none;
  background: #fff;
  color: #000;
  font-size: 28px;
}
.chevron {
  position: absolute;
  top: 34px;
  right: 6px;
  width: 18px;
  height: 12px;
  fill: none;
  stroke: #000;
  stroke-width: 2;
  pointer-events: none;
}
.facts { display: grid; gap: 32px; margin-top: 48px; }
.facts div { display: flex; align-items: center; justify-content: space-between; height: 48px; }
.facts dt { color: var(--slate-500); }
.facts dd { font-weight: 500; }
.badge {
  display: block;
  margin-top: 2px;
  padding: 4px 20px;
  border-radius: 20px;
  background: #dfe9fb;
  color: #2450d2;
  font-size: 24px;
  font-weight: 600;
  line-height: 29px;
}
.history { margin-top: 32px; padding-top: 32px; border-top: 2px solid var(--line); }
.history-title {
  margin-bottom: 16px;
  color: var(--slate-600);
  font-size: 28px;
  font-weight: 600;
  line-height: 40px;
}
.history-list { display: grid; gap: 24px; list-style: none; }
.history-list li { display: flex; gap: 24px; }
.stop { color: var(--slate-700); font-size: 28px; font-weight: 500; line-height: 40px; }
.time { color: var(--slate-400); font-size: 24px; line-height: 32px; }
.check { width: 28px; height: 28px; margin-top: 8px; flex: none; }
.check circle { fill: #5cc169; }
.check path { fill: none; stroke: #fff; stroke-width: 32; stroke-linecap: round; stroke-linejoin: round; }
.contact {
  display: flex;
  align-items: center;
  justify-content: center;
  gap: 16px;
  width: 100%;
  height: 96px;
  margin-top: 48px;
  padding: 0;
  border: 0;
  border-radius: 16px;
  background: var(--accent);
  color: #fff;
  font-weight: 700;
}
```
